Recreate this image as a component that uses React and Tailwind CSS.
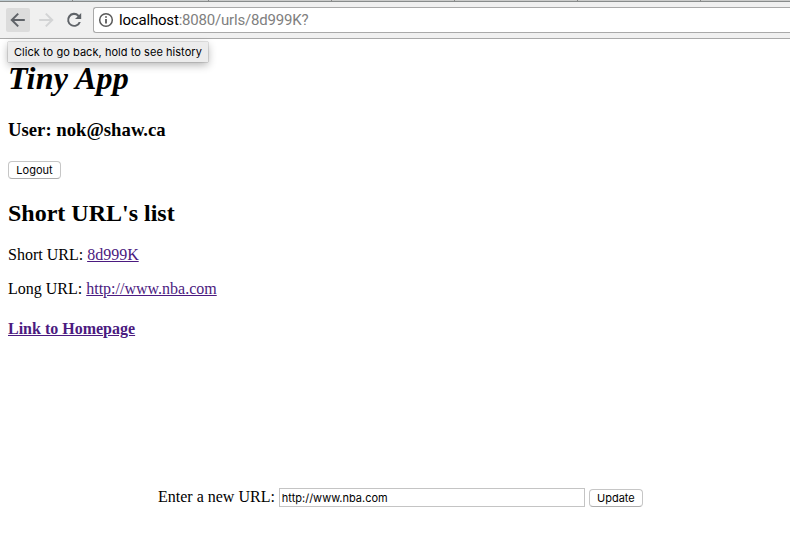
import React from "react";

const ticks = [72, 208, 331, 454, 577, 700];

function BrowserBar() {
  return (
    <header className="relative h-[39px] border-b border-[#a9a9a9] bg-[#f0f0f0]">
      <div className="relative h-[2px] border-b border-[#888b8b] bg-linear-to-r from-[#bfccd2] via-[#cbcccb] via-30% to-[#cbcccb]">
        {ticks.map((x) => (
          <span key={x} className="absolute top-0 h-px w-px bg-[#888]" style={{ left: x }} />
        ))}
      </div>
      <div className="flex h-[36px] pt-[5px] pl-[6px]">
        <div className="mt-px flex h-6 w-6 items-center justify-center rounded-[2px] bg-[#dcdcdc]">
          <svg width="24" height="24" viewBox="0 0 24 24" fill="none" stroke="#5f6368" strokeWidth="2">
            <path d="M18.8 12H6.5M12.2 5.6L5.8 12l6.4 6.4" />
          </svg>
        </div>
        <svg className="mt-px ml-1" width="24" height="24" viewBox="0 0 24 24" fill="none" stroke="#d3d4d5" strokeWidth="2">
          <path d="M5.2 12h12.3M11.8 5.6l6.4 6.4-6.4 6.4" />
        </svg>
        <svg className="mt-px ml-1" width="24" height="24" viewBox="0 0 24 24" fill="#5f6368">
          <path d="M17.1 6.9A7 7 0 1 0 18.8 14h-2.1a5 5 0 1 1-1.1-5.6L13 11h6.2V5z" />
        </svg>
        <div className="ml-[7px] flex h-[26px] flex-1 items-center rounded-l-[3px] border border-r-0 border-[#a9a9a9] bg-white pl-1">
          <svg width="16" height="16" viewBox="0 0 16 16" fill="none" stroke="#5a5a5a" strokeWidth="1.5">
            <circle cx="8" cy="8" r="6.3" />
            <path d="M8 7v4.5M8 4.2v1.6" strokeWidth="1.8" />
          </svg>
          <div className="ml-[5px] font-[Roboto,sans-serif] text-[15px] leading-6 tracking-[-0.19px] whitespace-nowrap text-[#808080]">
            <span className="text-black">localhost</span>:8080/urls/8d999K?
          </div>
        </div>
      </div>
      <div className="absolute top-[42px] left-[8px] flex h-[20px] w-[200px] items-center bg-[#ececec] pl-[6px] font-[Inter,sans-serif] text-[11px] tracking-[0.05px] whitespace-nowrap text-black shadow-[0_3px_8px_rgba(0,0,0,0.3),0_0_1px_rgba(0,0,0,0.6)]">
        Click to go back, hold to see history
      </div>
    </header>
  );
}

const button =
  "h-[18px] rounded-[4px] border border-[#c6c6c6] border-b-[#adadad] bg-white font-[Inter,sans-serif] text-[11px] leading-[16px] text-black";

export default function App() {
  return (
    <div className="h-[553px] overflow-hidden bg-white font-['Liberation_Serif',serif] text-base leading-[18px] text-black">
      <BrowserBar />
      <main className="px-2">
        <h1 className="mt-[21px] text-[32px] leading-[37px] font-bold tracking-[0.2px] italic">Tiny App</h1>
        <h3 className="mt-[22px] text-[18.72px] leading-[21px] font-bold">User: nok@shaw.ca</h3>
        <button className={`${button} mt-[21px] block w-[53px]`}>Logout</button>
        <h2 className="mt-[20px] text-[24px] leading-[28px] font-bold">Short URL's list</h2>
        <p className="mt-[19px]">
          Short URL: <a className="text-[#4b1a80] underline">8d999K</a>
        </p>
        <p className="mt-4">
          Long URL: <a className="text-[#4b1a80] underline">http://www.nba.com</a>
        </p>
        <h4 className="mt-[22px] font-bold">
          <a className="text-[#4b1a80] underline">Link to Homepage</a>
        </h4>
        <form className="mt-[150px] ml-[150px] flex items-start">
          <label>Enter a new URL:</label>
          <input
            className="ml-1 h-[19px] w-[306px] border border-[#c4c4c4] bg-white px-[2px] pt-px font-[Inter,sans-serif] text-[11px] text-black outline-none"
            defaultValue="http://www.nba.com"
          />
          <button type="button" className={`${button} mt-px ml-1 w-[54px]`}>Update</button>
        </form>
      </main>
    </div>
  );
}
